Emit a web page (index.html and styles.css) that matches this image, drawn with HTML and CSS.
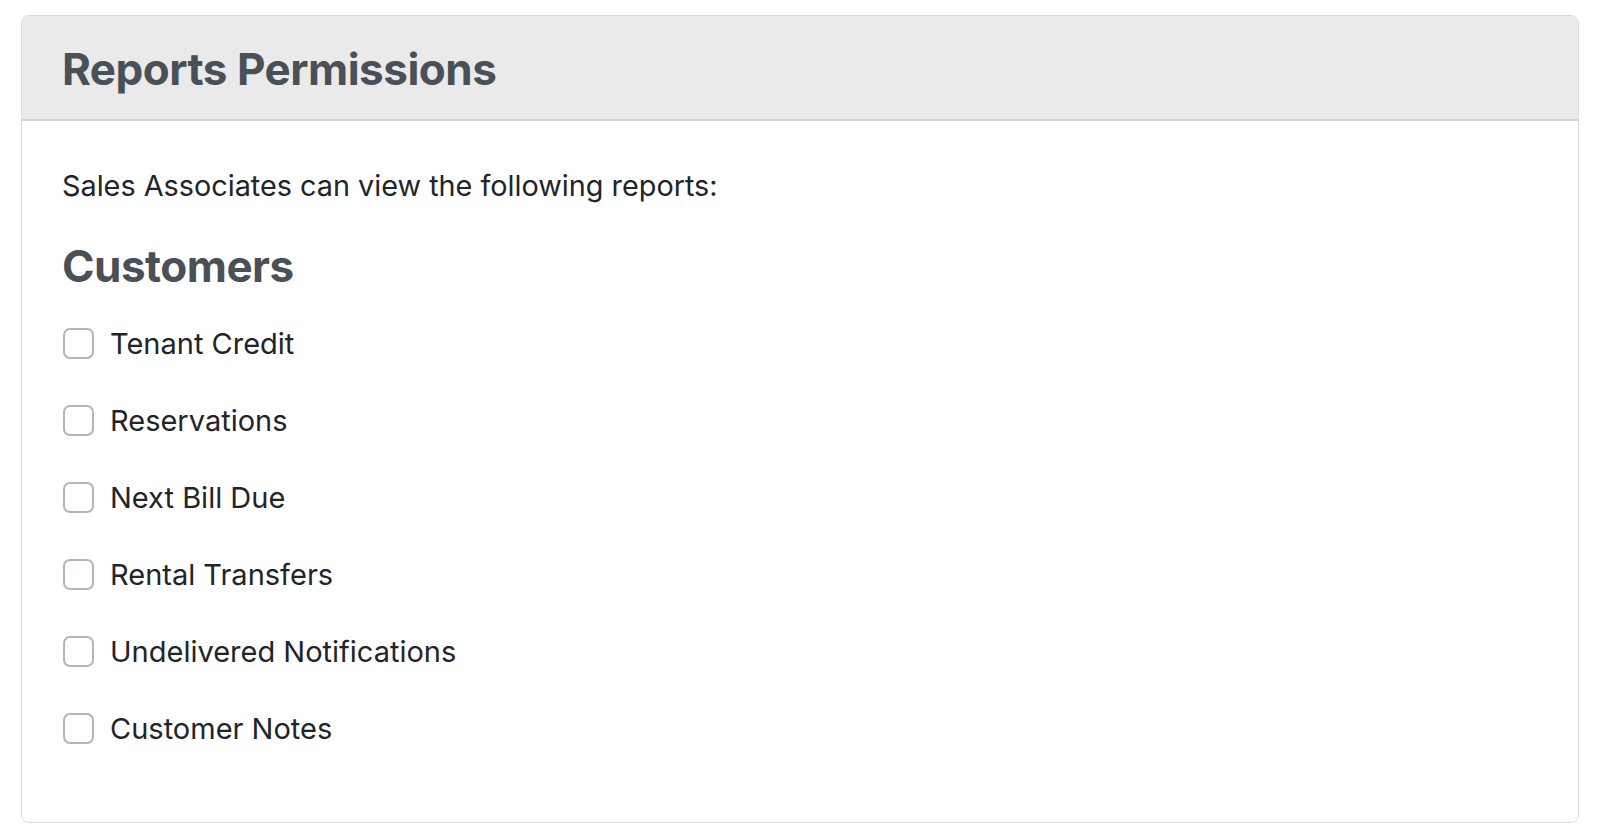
FILE: index.html
```html
<!DOCTYPE html>
<html lang="en">
<head>
    <meta charset="UTF-8">
    <meta name="viewport" content="width=device-width, initial-scale=1.0">
    <title>Reports Permissions</title>
    <link rel="stylesheet" href="styles.css">
</head>
<body>
    <div class="card">
        <div class="card-header">
            <h2>Reports Permissions</h2>
        </div>
        <div class="card-body">
            <p class="intro">Sales Associates can view the following reports:</p>

            <h3>Customers</h3>

            <label class="check"><input type="checkbox"> <span>Tenant Credit</span></label>
            <label class="check"><input type="checkbox"> <span>Reservations</span></label>
            <label class="check"><input type="checkbox"> <span>Next Bill Due</span></label>
            <label class="check"><input type="checkbox"> <span>Rental Transfers</span></label>
            <label class="check"><input type="checkbox"> <span>Undelivered Notifications</span></label>
            <label class="check"><input type="checkbox"> <span>Customer Notes</span></label>
        </div>
    </div>
</body>
</html>
```

FILE: styles.css
```css
body {
    margin: 0;
    padding: 15px 19px 0 21px;
    font-family: Inter, "Noto Sans", sans-serif;
    color: #212529;
    background: white;
}
.card {
    border: 1px solid #dcdcdc;
    border-radius: 8px;
    height: 806px;
    overflow: hidden;
}
.card-header {
    background: #eaeaea;
    border-bottom: 2px solid #d2d2d2;
    padding: 0 40px;
    height: 103px;
    display: flex;
    align-items: center;
}
.card-header h2 {
    margin: 0;
    padding-top: 2px;
    font-size: 44px;
    font-weight: 700;
    color: #495057;
    letter-spacing: -0.5px;
}
.card-body {
    padding: 47px 40px 40px;
}
.intro {
    margin: 0 0 36px;
    font-size: 28.8px;
}
h3 {
    margin: 0 0 35px;
    font-size: 44px;
    font-weight: 700;
    color: #495057;
    letter-spacing: -0.5px;
}
.check {
    display: flex;
    align-items: center;
    gap: 16px;
    height: 31px;
    margin-bottom: 46px;
    font-size: 29px;
}
.check input {
    appearance: none;
    margin: 0 0 0 1px;
    width: 31px;
    height: 31px;
    border: 2px solid #b0b6bf;
    border-radius: 7px;
    background: white;
}
```
